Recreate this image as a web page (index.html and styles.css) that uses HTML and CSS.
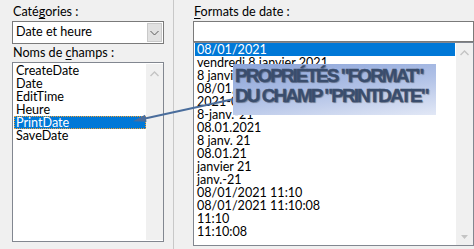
FILE: index.html
```html
<!DOCTYPE html>
<html>
  <head>
    <title>Champ - Formats de date</title>
    <link rel="stylesheet" href="styles.css">
  </head>

  <body>
    <div class="dialog">
      <div class="left">
        <div class="label">Caté<u>g</u>ories :</div>
        <div class="combo">
          <span class="combo-text">Date et heure</span>
          <span class="combo-btn">
            <svg width="9" height="6" viewBox="0 0 9 6"><path d="M0.5 1 L4.5 5 L8.5 1" fill="none" stroke="#5a5a5a" stroke-width="1"/></svg>
          </span>
        </div>
        <div class="label label-2">Noms de <u>c</u>hamps :</div>
        <div class="list list-fields">
          <div class="items">
            <div class="item">CreateDate</div>
            <div class="item">Date</div>
            <div class="item">EditTime</div>
            <div class="item">Heure</div>
            <div class="item selected focused">PrintDate</div>
            <div class="item">SaveDate</div>
          </div>
          <div class="scroll">
            <svg class="up" width="9" height="6" viewBox="0 0 9 6"><path d="M0.5 5 L4.5 1 L8.5 5" fill="none" stroke="#c4c4c4" stroke-width="1.4"/></svg>
          </div>
        </div>
      </div>

      <div class="divider"></div>

      <div class="right">
        <div class="label"><u>F</u>ormats de date :</div>
        <div class="textbox"></div>
        <div class="list list-formats">
          <div class="items">
            <div class="item selected">08/01/2021</div>
            <div class="item">vendredi 8 janvier 2021</div>
            <div class="item">8 janvier 2021</div>
            <div class="item">08/01/21</div>
            <div class="item">2021-01-08</div>
            <div class="item">8-janv.-21</div>
            <div class="item">08.01.2021</div>
            <div class="item">8 janv. 21</div>
            <div class="item">08.01.21</div>
            <div class="item">janvier 21</div>
            <div class="item">janv.-21</div>
            <div class="item">08/01/2021 11:10</div>
            <div class="item">08/01/2021 11:10:08</div>
            <div class="item">11:10</div>
            <div class="item">11:10:08</div>
          </div>
          <div class="scroll">
            <svg class="up" width="9" height="6" viewBox="0 0 9 6"><path d="M0.5 5 L4.5 1 L8.5 5" fill="none" stroke="#c4c4c4" stroke-width="1.4"/></svg>
            <svg class="down" width="7" height="4" viewBox="0 0 7 4"><path d="M0 0 L7 0 L3.5 4 Z" fill="#c4c4c4"/></svg>
          </div>
        </div>
      </div>
    </div>

    <!-- annotation over the dialog -->
    <svg class="arrow" width="474" height="249" viewBox="0 0 474 249">
      <line x1="234" y1="99" x2="145" y2="118.6" stroke="#4a6d9c" stroke-width="2"/>
      <polygon points="133,121.2 145,114.8 146.6,121.8" fill="#4a6d9c"/>
    </svg>
    <div class="callout">
      PROPRIÉTÉS "FORMAT"<br>
      DU CHAMP "PRINTDATE"
    </div>
  </body>

</html>
```

FILE: styles.css
```css
body {
  margin: 0;
  width: 474px;
  height: 249px;
  overflow: hidden;
  background-color: #f0f0f0;
  font-family: Lato, "Noto Sans", sans-serif;
  font-size: 12.6px;
  color: #000;
}

.dialog {
  display: flex;
  height: 249px;
}

.left {
  width: 152px;
  padding-left: 12px;
}

.label {
  height: 21px;
  line-height: 13px;
  padding-top: 5px;
  box-sizing: border-box;
  padding-left: 1px;
}

.label-2 {
  height: 18px;
  padding-top: 2px;
}

.label u {
  text-decoration-thickness: 1px;
  text-underline-offset: 2px;
}

.combo {
  display: flex;
  height: 23px;
  border: 1px solid #7a7a7a;
  box-sizing: border-box;
  background: white;
}

.combo-text {
  flex: 1;
  padding-left: 3px;
  line-height: 20px;
}

.combo-btn {
  width: 15px;
  margin: 1px 1px 1px 0;
  background: #e1e1e1;
  border: 1px solid #c9c9c9;
  box-sizing: border-box;
  display: flex;
  align-items: center;
  justify-content: center;
}

.list {
  display: flex;
  background: white;
  border: 1px solid #828790;
  box-sizing: border-box;
}

.list-fields {
  height: 180px;
  padding: 1px 0 1px 1px;
}

.items {
  flex: 1;
}

.item {
  height: 13px;
  line-height: 13px;
  padding-left: 2px;
  white-space: nowrap;
  box-sizing: border-box;
}

.selected {
  background: #0078d7;
  color: white;
}

.focused {
  border: 1px dotted #f0a030;
  padding-left: 1px;
  line-height: 11px;
}

.scroll {
  width: 17px;
  background: #f0f0f0;
  display: flex;
  flex-direction: column;
  align-items: center;
}

.scroll .up {
  margin-top: 7px;
}

.scroll .down {
  margin-top: auto;
  margin-bottom: 6px;
}

.divider {
  width: 1px;
  margin-left: 9px;
  background: #c8c8c8;
}

.right {
  width: 281px;
  margin-left: 19px;
}

.textbox {
  height: 21px;
  border: 1px solid #7a7a7a;
  box-sizing: border-box;
  background: white;
}

.list-formats {
  height: 204px;
  padding: 0 0 0 1px;
}

.list-formats .scroll {
  margin: 0 0 0 1px;
}

.arrow {
  position: absolute;
  left: 0;
  top: 0;
  pointer-events: none;
}

.callout {
  position: absolute;
  left: 233px;
  top: 64px;
  width: 203px;
  height: 51px;
  box-sizing: border-box;
  padding: 2px 0 0 2px;
  background: linear-gradient(172deg, #8aa3d8 0%, #afc0e6 50%, #e2e8f6 100%);
  font-family: "Liberation Sans", Arial, sans-serif;
  font-weight: bold;
  font-size: 19px;
  line-height: 20px;
  letter-spacing: -2px;
  color: #3a4d6d;
  -webkit-text-stroke: 0.4px #3a4d6d;
  text-shadow: 1px 1px 1px rgba(0, 0, 0, 0.35);
  white-space: nowrap;
}
```
